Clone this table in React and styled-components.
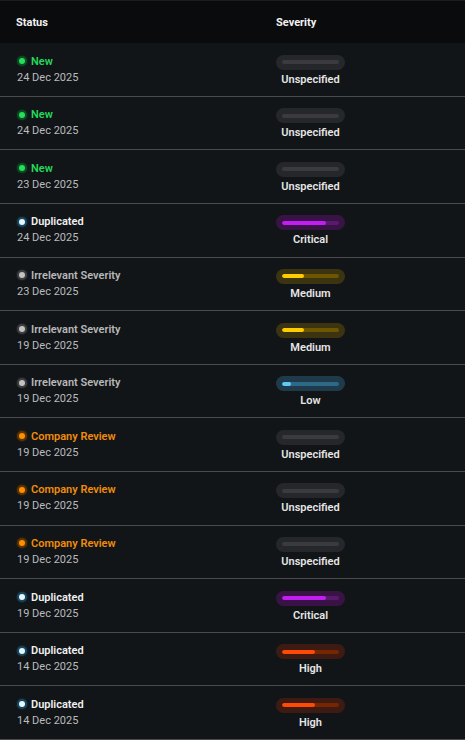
import styled, { createGlobalStyle } from 'styled-components';

const GlobalStyle = createGlobalStyle`
body {
    margin: 0;
    background: #121518;
    font-family: Roboto, "Liberation Sans", sans-serif;
}
`

const Table = styled.div`
display: flex;
flex-direction: column;
width: 465px;
height: 740px;
overflow: hidden;
background: #121518;
`

const Header = styled.div`
display: grid;
grid-template-columns: 260px 1fr;
align-items: center;
height: 44px;
box-sizing: border-box;
padding: 1px 16px 0;
background: #0a0b0d;
border-top: 1px solid #1b1d20;
color: #f2f2f2;
font-size: 11px;
font-weight: 700;
`

const Row = styled.div`
display: grid;
grid-template-columns: 260px 1fr;
align-items: center;
flex: 0 0 53.6px;
box-sizing: border-box;
padding: 0 16px;
border-bottom: 1px solid #4a4b4d;
`

const StatusCell = styled.div`
display: flex;
flex-direction: column;
gap: 3px;
margin-top: 0;
`

const StatusLine = styled.div`
display: flex;
align-items: center;
gap: 6px;
color: ${props => props.text};
font-size: 11px;
font-weight: 600;
line-height: 13px;
`

const Dot = styled.span`
width: 6px;
height: 6px;
margin-left: 3px;
border-radius: 50%;
background: ${props => props.color};
box-shadow: 0 0 0 2px ${props => props.ring}, 0 0 2px 2px ${props => props.ring};
`

const DateText = styled.div`
color: #b9bbbe;
font-size: 11px;
line-height: 14px;
padding-left: 1px;
`

const SeverityCell = styled.div`
display: flex;
flex-direction: column;
align-items: center;
width: 69px;
gap: 3px;
margin-top: 1px;
`

const Pill = styled.div`
display: flex;
align-items: center;
width: 69px;
height: 15px;
box-sizing: border-box;
padding: 0 6px;
border-radius: 8px;
background: ${props => props.bg};
`

const Track = styled.div`
flex: 1;
height: 4px;
border-radius: 2px;
background: ${props => props.track};
overflow: hidden;
`

const Fill = styled.div`
height: 100%;
border-radius: 2px;
background: ${props => props.fill};
`

const SeverityLabel = styled.div`
color: #e6e6e6;
font-size: 11px;
font-weight: 600;
line-height: 13px;
white-space: nowrap;
`

const statuses = {
    'New': { color: '#22e05a', ring: '#0f4a22', text: '#23d85a' },
    'Duplicated': { color: '#e6f6ff', ring: '#17465e', text: '#f0f0f0' },
    'Irrelevant Severity': { color: '#c2c2c2', ring: '#3c3d3f', text: '#b8b8b8' },
    'Company Review': { color: '#ff8f00', ring: '#5a3403', text: '#f08c0a' },
}

const severities = {
    Unspecified: { bg: '#25272a', track: '#393b3e', fill: 'transparent', pct: 0 },
    Critical: { bg: '#3a1346', track: '#581b6c', fill: '#c21df2', pct: 78 },
    Medium: { bg: '#3c3310', track: '#6a5700', fill: '#ffcc00', pct: 38 },
    Low: { bg: '#1f3b4b', track: '#2d6a87', fill: '#5fcaf2', pct: 16 },
    High: { bg: '#3e1b12', track: '#782502', fill: '#ff4a05', pct: 58 },
}

const rows = [
    ['New', '24 Dec 2025', 'Unspecified'],
    ['New', '24 Dec 2025', 'Unspecified'],
    ['New', '23 Dec 2025', 'Unspecified'],
    ['Duplicated', '24 Dec 2025', 'Critical'],
    ['Irrelevant Severity', '23 Dec 2025', 'Medium'],
    ['Irrelevant Severity', '19 Dec 2025', 'Medium'],
    ['Irrelevant Severity', '19 Dec 2025', 'Low'],
    ['Company Review', '19 Dec 2025', 'Unspecified'],
    ['Company Review', '19 Dec 2025', 'Unspecified'],
    ['Company Review', '19 Dec 2025', 'Unspecified'],
    ['Duplicated', '19 Dec 2025', 'Critical'],
    ['Duplicated', '14 Dec 2025', 'High'],
    ['Duplicated', '14 Dec 2025', 'High'],
]

const App = () => {
    return (
        <>
            <GlobalStyle />
            <Table>
                <Header>
                    <div>Status</div>
                    <div>Severity</div>
                </Header>
                {rows.map(([status, date, severity], i) => {
                    const s = statuses[status];
                    const sev = severities[severity];
                    return (
                        <Row key={i}>
                            <StatusCell>
                                <StatusLine text={s.text}>
                                    <Dot color={s.color} ring={s.ring} />
                                    {status}
                                </StatusLine>
                                <DateText>{date}</DateText>
                            </StatusCell>
                            <SeverityCell>
                                <Pill bg={sev.bg}>
                                    <Track track={sev.track}>
                                        <Fill fill={sev.fill} style={{ width: `${sev.pct}%` }} />
                                    </Track>
                                </Pill>
                                <SeverityLabel>{severity}</SeverityLabel>
                            </SeverityCell>
                        </Row>
                    )
                })}
            </Table>
        </>
    )
}

export default App
